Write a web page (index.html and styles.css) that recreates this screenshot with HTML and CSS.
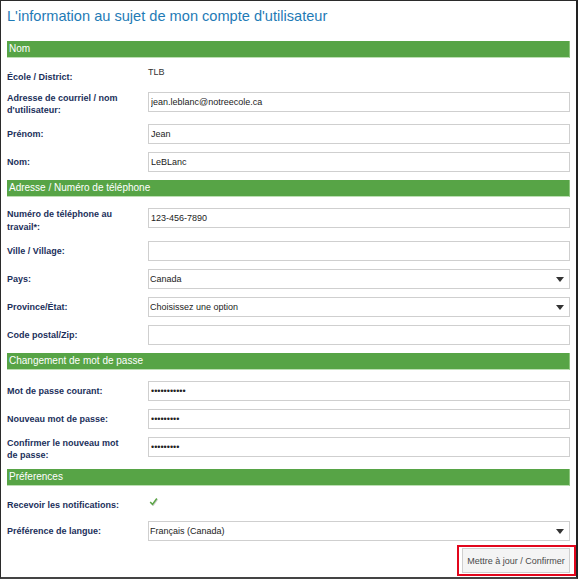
FILE: index.html
```html
<!DOCTYPE html>
<html lang="fr">
<head>
    <meta charset="UTF-8">
    <meta name="viewport" content="width=device-width, initial-scale=1.0">
    <title>Mon compte</title>
    <link rel="stylesheet" href="styles.css">
</head>
<body>
    <div class="frame">
        <h1 class="title">L'information au sujet de mon compte d'utilisateur</h1>

        <div class="section-bar">Nom</div>
        <div class="row row-static">
            <div class="label">École / District:</div>
            <div class="value">TLB</div>
        </div>
        <div class="row">
            <div class="label">Adresse de courriel / nom d'utilisateur:</div>
            <div class="control"><input type="text" value="jean.leblanc@notreecole.ca"></div>
        </div>
        <div class="row">
            <div class="label">Prénom:</div>
            <div class="control"><input type="text" value="Jean"></div>
        </div>
        <div class="row">
            <div class="label">Nom:</div>
            <div class="control"><input type="text" value="LeBLanc"></div>
        </div>

        <div class="section-bar">Adresse / Numéro de téléphone</div>
        <div class="row">
            <div class="label label-tall">Numéro de téléphone au travail*:</div>
            <div class="control"><input type="text" value="123-456-7890"></div>
        </div>
        <div class="row">
            <div class="label">Ville / Village:</div>
            <div class="control"><input type="text" value=""></div>
        </div>
        <div class="row">
            <div class="label">Pays:</div>
            <div class="control select-wrap">
                <select><option>Canada</option></select>
            </div>
        </div>
        <div class="row">
            <div class="label">Province/État:</div>
            <div class="control select-wrap">
                <select><option>Choisissez une option</option></select>
            </div>
        </div>
        <div class="row">
            <div class="label">Code postal/Zip:</div>
            <div class="control"><input type="text" value=""></div>
        </div>

        <div class="section-bar">Changement de mot de passe</div>
        <div class="row">
            <div class="label">Mot de passe courant:</div>
            <div class="control"><input type="password" value="motdepasse1"></div>
        </div>
        <div class="row">
            <div class="label">Nouveau mot de passe:</div>
            <div class="control"><input type="password" value="nouveau12"></div>
        </div>
        <div class="row">
            <div class="label">Confirmer le nouveau mot de passe:</div>
            <div class="control"><input type="password" value="nouveau12"></div>
        </div>

        <div class="section-bar">Préferences</div>
        <div class="row row-check">
            <div class="label">Recevoir les notifications:</div>
            <div class="value check">
                <svg width="9" height="9" viewBox="0 0 9 9">
                    <path d="M1.2 5 L3.5 7.4 L7.8 1.5" fill="none" stroke="#cfcfcf" stroke-width="1.6" transform="translate(0.7 0.7)"/>
                    <path d="M1.2 5 L3.5 7.4 L7.8 1.5" fill="none" stroke="#5aa545" stroke-width="1.5"/>
                </svg>
            </div>
        </div>
        <div class="row">
            <div class="label">Préférence de langue:</div>
            <div class="control select-wrap">
                <select><option>Français (Canada)</option></select>
            </div>
        </div>

        <div class="actions">
            <span class="highlight">
                <button type="button" class="btn-update">Mettre à jour / Confirmer</button>
            </span>
        </div>
    </div>
</body>
</html>
```

FILE: styles.css
```css
body {
    margin: 0;
    background-color: white;
    font-family: "Liberation Sans", Arial, sans-serif;
}
.frame {
    box-sizing: border-box;
    width: 578px;
    height: 579px;
    overflow: hidden;
    border-top: 1px solid #2b2b2b;
    border-left: 1px solid #2b2b2b;
    border-right: 2px solid #222;
    border-bottom: 2px solid #444;
    padding: 0 6px;
}
.title {
    margin: 0 0 15px 0;
    padding-top: 5px;
    font-size: 14.6px;
    line-height: 20px;
    font-weight: normal;
    color: #1f7bb6;
}
.section-bar {
    height: 16px;
    line-height: 16px;
    margin-top: 4px;
    margin-bottom: 7px;
    padding-left: 2px;
    background-color: #57a446;
    border-bottom: 1px solid #bddfb4;
    border-right: 1px solid #8cc57d;
    color: white;
    font-size: 10px;
}
.title + .section-bar {
    margin-top: 0;
}
.row {
    display: flex;
    padding: 4px 0;
}
.row-static {
    height: 23px;
    box-sizing: border-box;
    padding: 0;
}
.row-check {
    height: 24px;
    box-sizing: border-box;
}
.label {
    width: 141px;
    flex-shrink: 0;
    align-self: center;
    padding-right: 20px;
    box-sizing: border-box;
    font-size: 9px;
    line-height: 12px;
    font-weight: bold;
    color: #1b2f5b;
}
.label-tall {
    line-height: 12.5px;
}
.value {
    align-self: flex-start;
    padding-top: 1px;
    font-size: 9px;
    line-height: 12px;
    color: #333;
}
.check {
    padding-top: 0;
    padding-left: 1px;
    line-height: 0;
}
.control {
    flex: 1;
    align-self: flex-start;
}
input, select {
    display: block;
    box-sizing: border-box;
    width: 100%;
    height: 20px;
    margin: 0;
    padding: 0 2px;
    border: 1px solid #cfcfcf;
    border-radius: 0;
    background-color: white;
    font-family: "Liberation Sans", Arial, sans-serif;
    font-size: 9px;
    color: #222;
    outline: none;
}
select {
    appearance: none;
    -webkit-appearance: none;
    padding-left: 1px;
}
.select-wrap {
    position: relative;
}
.select-wrap::after {
    content: "";
    position: absolute;
    right: 6px;
    top: 8px;
    border-left: 4px solid transparent;
    border-right: 4px solid transparent;
    border-top: 5px solid #333;
    pointer-events: none;
}
.actions {
    display: flex;
    justify-content: flex-end;
    margin-right: -6px;
}
.highlight {
    display: flex;
    border: 2px solid #e2061c;
    padding: 1px 4px 1px 3px;
}
.btn-update {
    width: 108px;
    height: 25px;
    margin: 0;
    padding: 0;
    border: 1px solid #cfcfcf;
    background-color: #f4f4f4;
    font-family: "Liberation Sans", Arial, sans-serif;
    font-size: 9px;
    color: #4a4a4a;
    cursor: pointer;
}
```
